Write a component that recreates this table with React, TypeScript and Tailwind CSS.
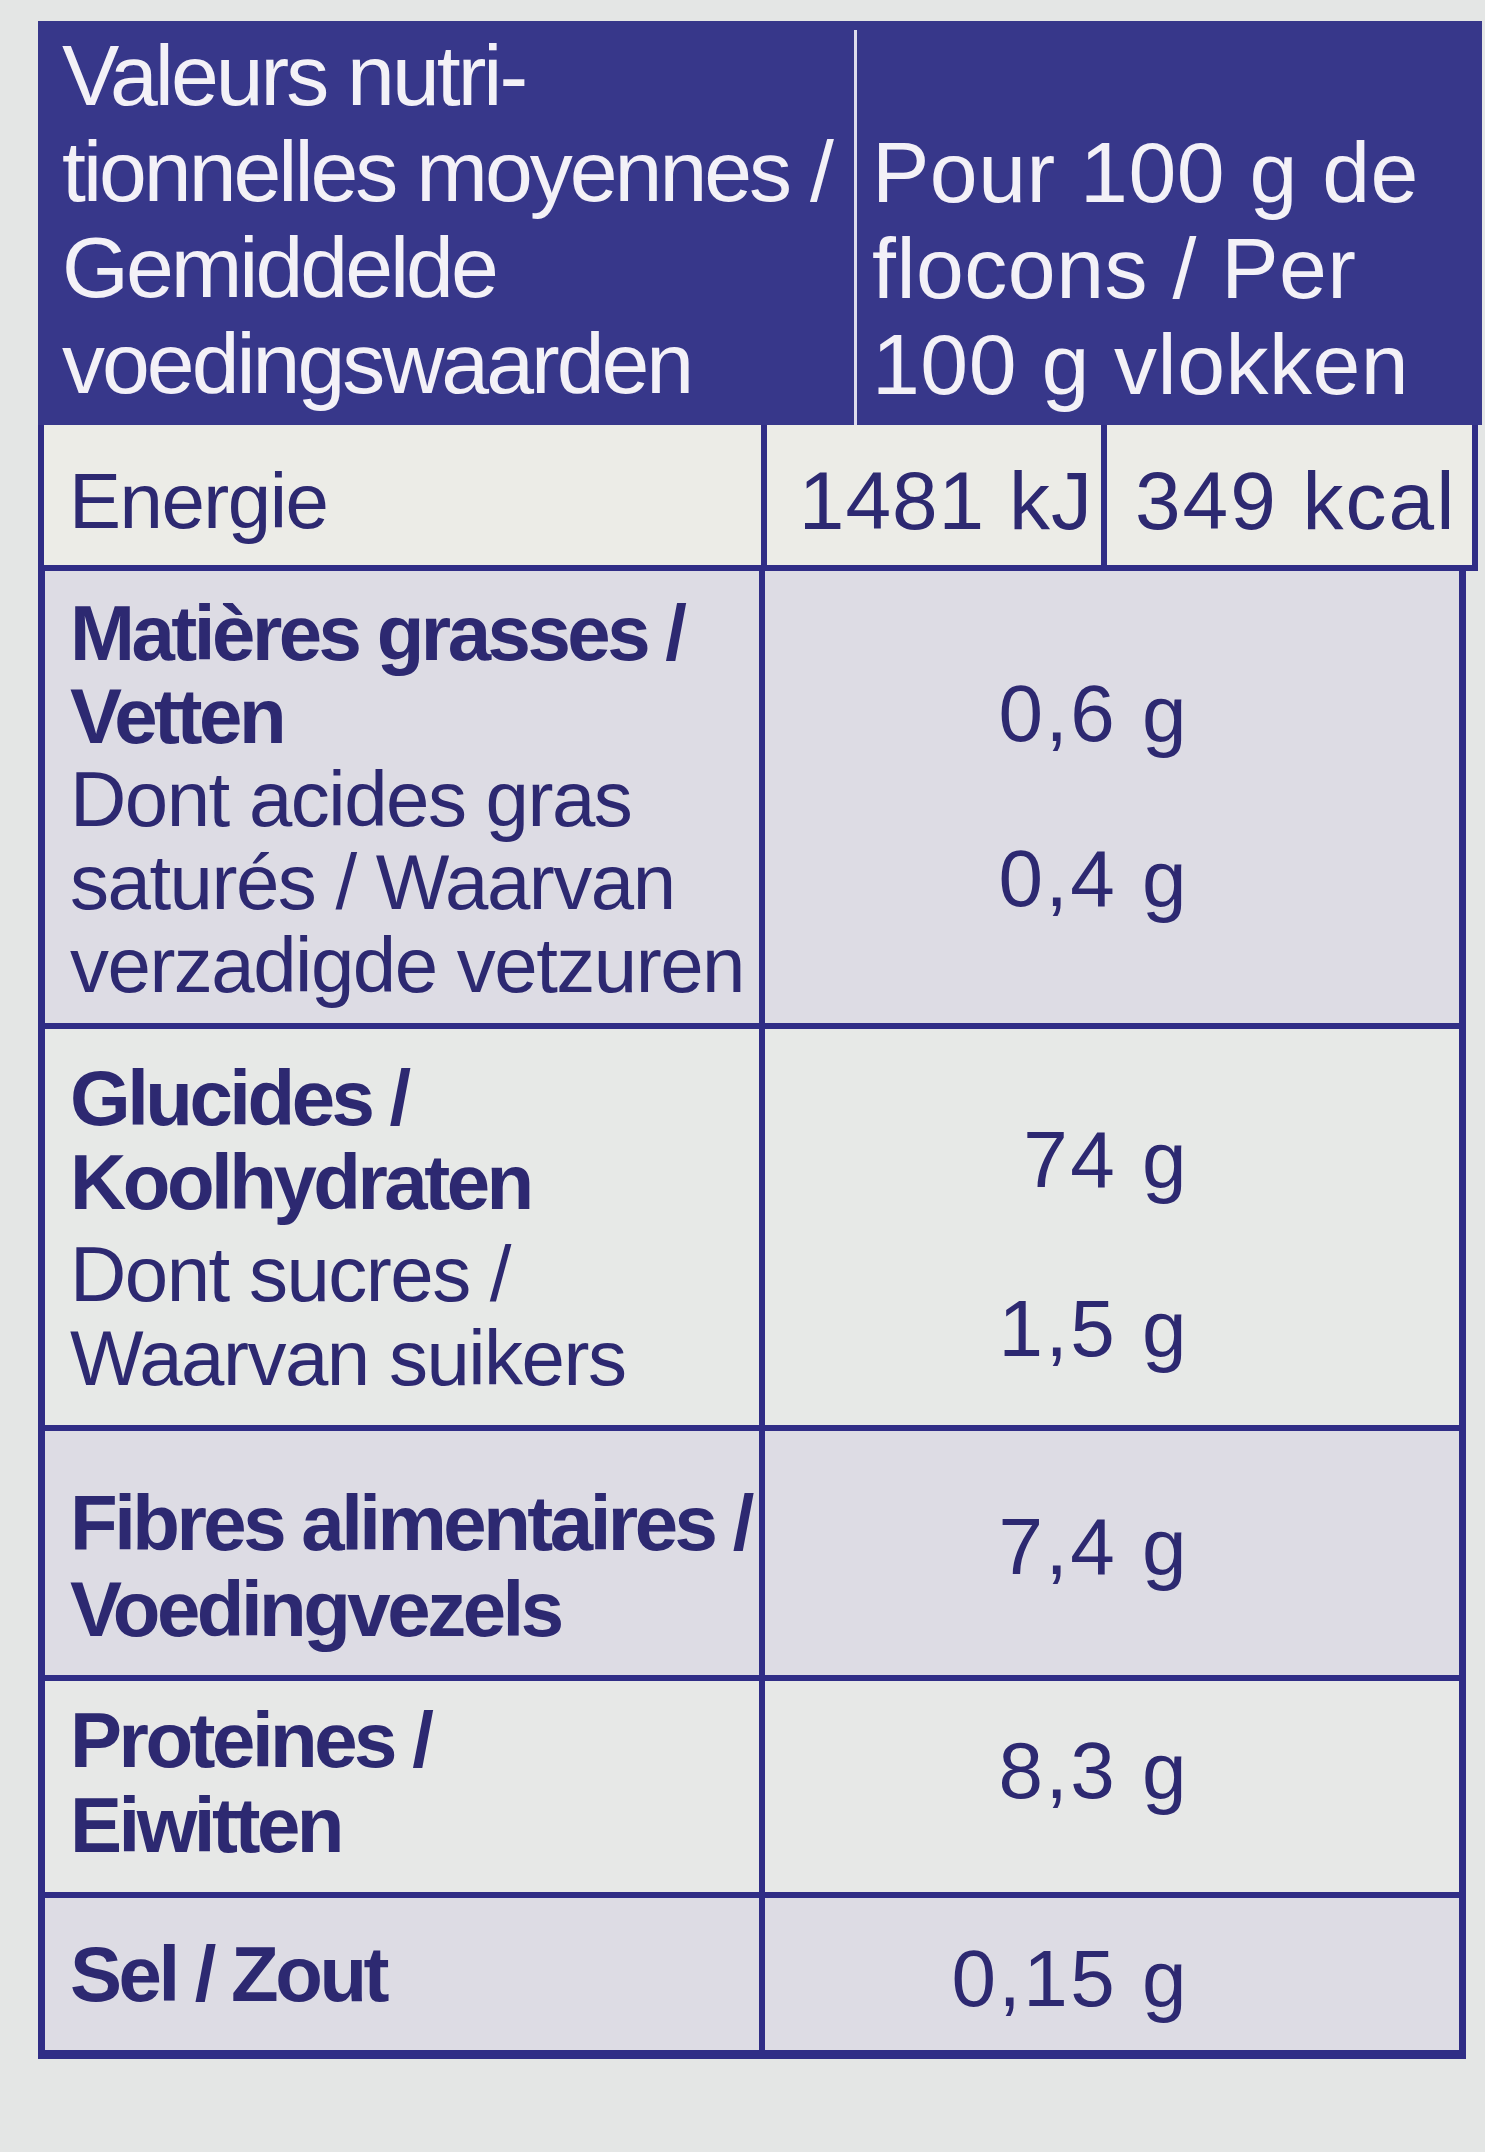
const NAVY = "border-[#302d86]";

type Line = { text: string; bold?: boolean };

type Row = {
  bg: string;
  height: string;
  labelPad: string;
  labelLeading: string;
  groups: Line[][];
  groupGap: string;
  valuePad: string;
  values: string[];
  valueGap: string;
};

const ROWS: Row[] = [
  {
    bg: "bg-[#dddce4]",
    height: "h-[452px]",
    labelPad: "pt-[21px]",
    labelLeading: "leading-[83px]",
    groups: [
      [{ text: "Matières grasses /", bold: true }, { text: "Vetten", bold: true }],
      [{ text: "Dont acides gras" }, { text: "saturés / Waarvan" }, { text: "verzadigde vetzuren" }],
    ],
    groupGap: "mt-0",
    valuePad: "pt-[101px]",
    values: ["0,6 g", "0,4 g"],
    valueGap: "mt-[81px]",
  },
  {
    bg: "bg-[#e7e9e7]",
    height: "h-[396px]",
    labelPad: "pt-[27px]",
    labelLeading: "leading-[84px]",
    groups: [
      [{ text: "Glucides /", bold: true }, { text: "Koolhydraten", bold: true }],
      [{ text: "Dont sucres /" }, { text: "Waarvan suikers" }],
    ],
    groupGap: "mt-[8px]",
    valuePad: "pt-[89px]",
    values: ["74 g", "1,5 g"],
    valueGap: "mt-[85px]",
  },
  {
    bg: "bg-[#dddce4]",
    height: "h-[244px]",
    labelPad: "pt-[49px]",
    labelLeading: "leading-[86px]",
    groups: [[{ text: "Fibres alimentaires /", bold: true }, { text: "Voedingvezels", bold: true }]],
    groupGap: "mt-0",
    valuePad: "pt-[74px]",
    values: ["7,4 g"],
    valueGap: "mt-0",
  },
  {
    bg: "bg-[#e7e8e7]",
    height: "h-[211px]",
    labelPad: "pt-[17px]",
    labelLeading: "leading-[85px]",
    groups: [[{ text: "Proteines /", bold: true }, { text: "Eiwitten", bold: true }]],
    groupGap: "mt-0",
    valuePad: "pt-[48px]",
    values: ["8,3 g"],
    valueGap: "mt-0",
  },
  {
    bg: "bg-[#dddce4]",
    height: "h-[152px]",
    labelPad: "pt-[34px]",
    labelLeading: "leading-[84px]",
    groups: [[{ text: "Sel / Zout", bold: true }]],
    groupGap: "mt-0",
    valuePad: "pt-[39px]",
    values: ["0,15 g"],
    valueGap: "mt-0",
  },
];

function NutrientRow({ row, first }: { row: Row; first: boolean }) {
  return (
    <div className={`flex ${row.height} ${row.bg} ${first ? "" : "border-t-[6px]"} ${NAVY} box-content`}>
      <div className={`w-[714px] shrink-0 pl-[25px] ${row.labelPad} ${row.labelLeading} text-[78px]`}>
        {row.groups.map((g, gi) => (
          <div key={gi} className={gi > 0 ? row.groupGap : ""}>
            {g.map((l) => (
              <div
                key={l.text}
                className={l.bold ? "font-bold tracking-[-3.5px] whitespace-nowrap" : "tracking-[-1.5px] whitespace-nowrap"}
              >
                {l.text}
              </div>
            ))}
          </div>
        ))}
      </div>
      <div className={`flex-1 border-l-[6px] ${NAVY} pr-[270px] text-right ${row.valuePad} text-[80px] leading-[84px] tracking-[2.5px]`}>
        {row.values.map((v, i) => (
          <div key={v} className={i > 0 ? row.valueGap : ""}>
            {v}
          </div>
        ))}
      </div>
    </div>
  );
}

export default function App() {
  return (
    <div className="min-h-[2152px] w-[1485px] overflow-hidden bg-[#e4e6e5] pl-[38px] pt-[21px] font-['Liberation_Sans',Arial,sans-serif] text-[#2d2971]">
      {/* header band */}
      <div className="flex h-[404px] w-[1444px] bg-[#37378a] text-[#f3f1f7]">
        <div className="w-[816px] shrink-0 pl-[24px] pt-[6px] text-[86px] leading-[96px] tracking-[-3px] whitespace-nowrap">
          <div>Valeurs nutri-</div>
          <div>tionnelles moyennes /</div>
          <div>Gemiddelde</div>
          <div>voedingswaarden</div>
        </div>
        <div className="mt-[9px] w-[3px] shrink-0 bg-[#dedcee]" />
        <div className="pl-[15px] pt-[103px] text-[86px] leading-[96px] tracking-[0.5px] whitespace-nowrap">
          <div>Pour 100 g de</div>
          <div>flocons / Per</div>
          <div>100 g vlokken</div>
        </div>
      </div>

      {/* energy */}
      <div className={`flex h-[140px] w-[1428px] box-content border-x-[6px] border-b-[6px] ${NAVY} bg-[#ecece7]`}>
        <div className="w-[717px] shrink-0 pl-[25px] pt-[35px] text-[78px] leading-[82px] tracking-[-1.5px]">Energie</div>
        <div className={`w-[340px] shrink-0 border-l-[6px] ${NAVY} pr-[8px] pt-[35px] text-right text-[82px] leading-[82px] tracking-[1px]`}>
          1481 kJ
        </div>
        <div className={`flex-1 border-l-[6px] ${NAVY} pl-[28px] pt-[35px] text-[82px] leading-[82px] tracking-[2px] whitespace-nowrap`}>
          349 kcal
        </div>
      </div>

      {/* nutrients */}
      <div className={`w-[1414px] box-content border-x-[7px] border-b-[9px] ${NAVY}`}>
        {ROWS.map((r, i) => (
          <NutrientRow key={i} row={r} first={i === 0} />
        ))}
      </div>
    </div>
  );
}
